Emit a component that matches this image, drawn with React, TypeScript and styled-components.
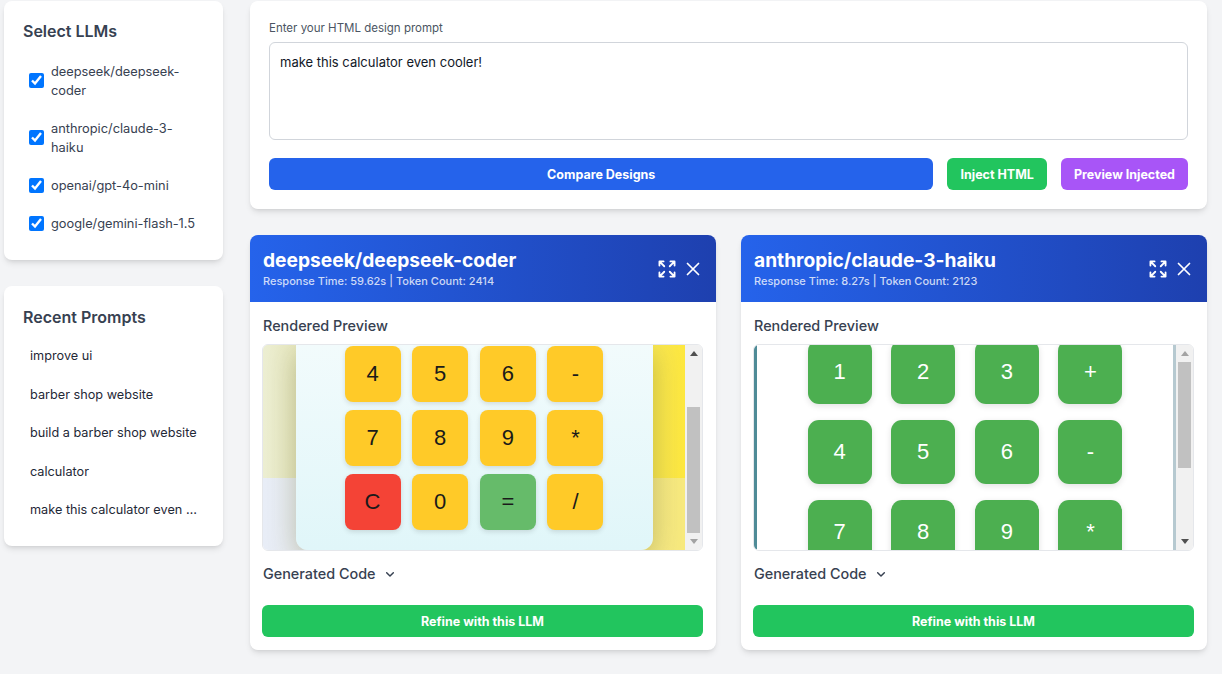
import React from "react";
import styled, { createGlobalStyle } from "styled-components";

const GlobalStyle = createGlobalStyle`
  * { box-sizing: border-box; }
  html, body { margin: 0; padding: 0; background: #f3f4f6; }
  body { font-family: Inter, "Noto Sans", sans-serif; color: #1f2937; }
`;

const Page = styled.div`
  display: flex;
  align-items: flex-start;
  gap: 27px;
  width: 1222px;
  padding: 1px 15px 24px 4px;
`;

const Sidebar = styled.aside`
  width: 219px;
  flex: none;
  display: flex;
  flex-direction: column;
  gap: 26px;
`;

const Panel = styled.section`
  background: #ffffff;
  border-radius: 8px;
  box-shadow: 0 4px 6px -1px rgba(0, 0, 0, 0.1), 0 2px 4px -2px rgba(0, 0, 0, 0.1);
`;

const SideCard = styled(Panel)<{ $top: number; $bottom: number }>`
  padding: ${(p) => p.$top}px 19px ${(p) => p.$bottom}px;
`;

const SideTitle = styled.h2`
  margin: 0;
  font-size: 16px;
  line-height: 20px;
  font-weight: 600;
  color: #374151;
`;

const CheckList = styled.div`
  margin-top: 11px;
  display: flex;
  flex-direction: column;
`;

const CheckItem = styled.label`
  display: flex;
  align-items: center;
  gap: 7px;
  padding: 9.5px 6px 9.5px 6px;
  font-size: 12.8px;
  line-height: 19px;
  color: #374151;
`;

const Check = styled.input`
  width: 15px;
  height: 15px;
  margin: 0;
  flex: none;
`;

const PromptList = styled.div`
  margin-top: 10px;
  display: flex;
  flex-direction: column;
`;

const PromptItem = styled.button`
  display: block;
  width: 100%;
  text-align: left;
  background: none;
  border: 0;
  padding: 10px 5px 10px 7px;
  font-family: inherit;
  font-size: 12.7px;
  line-height: 18.5px;
  color: #1f2937;
  white-space: nowrap;
  overflow: hidden;
  text-overflow: ellipsis;
  cursor: pointer;
`;

const Main = styled.main`
  flex: 1;
  min-width: 0;
  display: flex;
  flex-direction: column;
  gap: 26px;
`;

const PromptCard = styled(Panel)`
  padding: 20px 19px 19px;
`;

const FieldLabel = styled.label`
  display: block;
  font-size: 11.5px;
  line-height: 14px;
  color: #4b5563;
  margin-bottom: 7px;
`;

const PromptArea = styled.textarea`
  display: block;
  width: 100%;
  height: 98px;
  margin: 0 0 18px;
  padding: 10px;
  border: 1px solid #d1d5db;
  border-radius: 6px;
  font-family: inherit;
  font-size: 13px;
  line-height: 18px;
  color: #111827;
  resize: none;
  outline: none;
`;

const ButtonRow = styled.div`
  display: flex;
  gap: 14px;
`;

const ActionButton = styled.button<{ $bg: string; $grow?: boolean }>`
  flex: ${(p) => (p.$grow ? "1" : "none")};
  height: 32px;
  padding: 0 13px;
  border: 0;
  border-radius: 6px;
  background: ${(p) => p.$bg};
  color: #ffffff;
  font-family: inherit;
  font-size: 12.5px;
  font-weight: 700;
  cursor: pointer;
`;

const CardGrid = styled.div`
  display: grid;
  grid-template-columns: 1fr 1fr;
  gap: 25px;
`;

const ResultCard = styled(Panel)`
  overflow: hidden;
  display: flex;
  flex-direction: column;
`;

const CardHeader = styled.header`
  display: flex;
  align-items: center;
  justify-content: space-between;
  padding: 14px 12px 14px 13px;
  background: linear-gradient(90deg, #2563eb, #1e40af);
  color: #ffffff;
`;

const HeaderTitle = styled.h3`
  margin: 0;
  font-size: 19.2px;
  line-height: 22px;
  font-weight: 700;
`;

const HeaderMeta = styled.div`
  margin-top: 3px;
  font-size: 11px;
  line-height: 14px;
  font-weight: 500;
  color: rgba(255, 255, 255, 0.78);
`;

const IconGroup = styled.div`
  display: flex;
  align-items: center;
  gap: 4px;
`;

const IconButton = styled.button`
  display: flex;
  align-items: center;
  justify-content: center;
  width: 22px;
  height: 22px;
  padding: 0;
  border: 0;
  background: none;
  color: #ffffff;
  cursor: pointer;
`;

const CardBody = styled.div`
  padding: 14px 13px 13px 12px;
  display: flex;
  flex-direction: column;
`;

const SectionLabel = styled.div`
  font-size: 14.4px;
  line-height: 20px;
  font-weight: 500;
  color: #374151;
  padding-left: 1px;
`;

const Frame = styled.div`
  margin-top: 8px;
  height: 207px;
  border: 1px solid #e5e7eb;
  border-radius: 6px;
  overflow: hidden;
  display: flex;
`;

const CodeToggle = styled.div`
  margin-top: 13px;
  display: flex;
  align-items: center;
  gap: 6px;
`;

const RefineButton = styled.button`
  margin-top: 21px;
  height: 32px;
  border: 0;
  border-radius: 6px;
  background: #22c55e;
  color: #ffffff;
  font-family: inherit;
  font-size: 12.5px;
  font-weight: 700;
  cursor: pointer;
`;

/* ---- left preview (yellow calculator) ---- */
const SunnyViewport = styled.div`
  flex: 1;
  overflow: hidden;
  display: flex;
  flex-direction: column;
  justify-content: flex-end;
  align-items: center;
  background:
    linear-gradient(90deg, #eceed2, #e4e3a8 18%, #f4ea78 80%, #fde73e) top / 100% 133px no-repeat,
    linear-gradient(90deg, #e8edf7, #eef0d8 40%, #f5ea92 85%, #f7e97c);
`;

const CalcPanel = styled.div`
  width: 357px;
  flex: none;
  padding: 1px 0 20px;
  border-radius: 0 0 12px 12px;
  background: linear-gradient(180deg, #f2fbfc, #e0f6f9);
  box-shadow: 0 8px 28px rgba(60, 60, 0, 0.28);
`;

const YellowGrid = styled.div`
  display: grid;
  grid-template-columns: repeat(4, 56px);
  column-gap: 11.67px;
  row-gap: 8px;
  justify-content: center;
`;

const YellowKey = styled.div<{ $bg: string }>`
  height: 56px;
  border-radius: 8px;
  background: ${(p) => p.$bg};
  display: flex;
  align-items: center;
  justify-content: center;
  font-family: "Liberation Sans", Arial, sans-serif;
  font-size: 22px;
  color: #1a1a1a;
  box-shadow: 0 2px 5px rgba(0, 0, 0, 0.12);
`;

/* ---- right preview (green calculator) ---- */
const PlainViewport = styled.div`
  flex: 1;
  overflow: hidden;
  background: #ffffff;
  border-left: 3px solid #4f8b97;
  border-right: 3px solid #b6c9d0;
`;

const GreenGrid = styled.div`
  margin-top: -5px;
  display: grid;
  grid-template-columns: repeat(4, 64px);
  column-gap: 19.67px;
  row-gap: 16px;
  justify-content: center;
`;

const GreenKey = styled.div`
  height: 64px;
  border-radius: 11px;
  background: #4caf50;
  display: flex;
  align-items: center;
  justify-content: center;
  font-family: "Liberation Sans", Arial, sans-serif;
  font-size: 22px;
  color: #ffffff;
  box-shadow: 0 2px 6px rgba(0, 0, 0, 0.12);
`;

/* ---- fake scrollbar ---- */
const ScrollBar = styled.div`
  width: 17px;
  flex: none;
  background: #f1f1f1;
  display: flex;
  flex-direction: column;
`;

const ArrowBox = styled.div`
  height: 17px;
  flex: none;
  display: flex;
  align-items: center;
  justify-content: center;
`;

const Track = styled.div`
  flex: 1;
  display: flex;
  flex-direction: column;
`;

const Thumb = styled.div<{ $offset: number; $size: number }>`
  margin: ${(p) => p.$offset}px 2px 0;
  height: ${(p) => p.$size}px;
  background: #c1c1c1;
`;

const Arrow = ({ up, color }: { up?: boolean; color: string }) => (
  <svg width="8" height="5" viewBox="0 0 8 5">
    <polygon points={up ? "0,5 8,5 4,0" : "0,0 8,0 4,5"} fill={color} />
  </svg>
);

const FakeScroll = ({
  offset,
  size,
  upColor,
  downColor,
}: {
  offset: number;
  size: number;
  upColor: string;
  downColor: string;
}) => (
  <ScrollBar>
    <ArrowBox>
      <Arrow up color={upColor} />
    </ArrowBox>
    <Track>
      <Thumb $offset={offset} $size={size} />
    </Track>
    <ArrowBox>
      <Arrow color={downColor} />
    </ArrowBox>
  </ScrollBar>
);

const ExpandIcon = () => (
  <svg width="22" height="22" viewBox="0 0 24 24" fill="none" stroke="currentColor" strokeWidth="2" strokeLinecap="round" strokeLinejoin="round">
    <path d="M3.75 3.75v4.5m0-4.5h4.5m-4.5 0L9 9M3.75 20.25v-4.5m0 4.5h4.5m-4.5 0L9 15M20.25 3.75h-4.5m4.5 0v4.5m0-4.5L15 9m5.25 11.25h-4.5m4.5 0v-4.5m0 4.5L15 15" />
  </svg>
);

const CloseIcon = () => (
  <svg width="22" height="22" viewBox="0 0 24 24" fill="none" stroke="currentColor" strokeWidth="1.9" strokeLinecap="round" strokeLinejoin="round">
    <path d="M6 18 18 6M6 6l12 12" />
  </svg>
);

const Chevron = () => (
  <svg width="16" height="16" viewBox="0 0 24 24" fill="none" stroke="#374151" strokeWidth="2.2" strokeLinecap="round" strokeLinejoin="round">
    <polyline points="7 10 12 15 17 10" />
  </svg>
);

const yellowKeys: { label: string; bg: string }[] = [
  ..."456-".split("").map((l) => ({ label: l, bg: "#ffca28" })),
  ..."789*".split("").map((l) => ({ label: l, bg: "#ffca28" })),
  { label: "C", bg: "#f44336" },
  { label: "0", bg: "#ffca28" },
  { label: "=", bg: "#66bb6a" },
  { label: "/", bg: "#ffca28" },
];

const greenKeys = "123+456-789*".split("");

const SunnyPreview = () => (
  <Frame>
    <SunnyViewport>
      <CalcPanel>
        <YellowGrid>
          {yellowKeys.map((k, i) => (
            <YellowKey key={i} $bg={k.bg}>
              {k.label}
            </YellowKey>
          ))}
        </YellowGrid>
      </CalcPanel>
    </SunnyViewport>
    <FakeScroll offset={45} size={126} upColor="#505050" downColor="#a3a3a3" />
  </Frame>
);

const GreenPreview = () => (
  <Frame>
    <PlainViewport>
      <GreenGrid>
        {greenKeys.map((k, i) => (
          <GreenKey key={i}>{k}</GreenKey>
        ))}
      </GreenGrid>
    </PlainViewport>
    <FakeScroll offset={0} size={106} upColor="#a3a3a3" downColor="#505050" />
  </Frame>
);

const LLMCard = ({
  name,
  meta,
  preview,
}: {
  name: string;
  meta: string;
  preview: React.ReactNode;
}) => (
  <ResultCard>
    <CardHeader>
      <div>
        <HeaderTitle>{name}</HeaderTitle>
        <HeaderMeta>{meta}</HeaderMeta>
      </div>
      <IconGroup>
        <IconButton aria-label="Expand">
          <ExpandIcon />
        </IconButton>
        <IconButton aria-label="Close">
          <CloseIcon />
        </IconButton>
      </IconGroup>
    </CardHeader>
    <CardBody>
      <SectionLabel>Rendered Preview</SectionLabel>
      {preview}
      <CodeToggle>
        <SectionLabel>Generated Code</SectionLabel>
        <Chevron />
      </CodeToggle>
      <RefineButton>Refine with this LLM</RefineButton>
    </CardBody>
  </ResultCard>
);

const models = [
  "deepseek/deepseek-coder",
  "anthropic/claude-3-haiku",
  "openai/gpt-4o-mini",
  "google/gemini-flash-1.5",
];

const recent = [
  "improve ui",
  "barber shop website",
  "build a barber shop website",
  "calculator",
  "make this calculator even cooler!",
];

export default function App() {
  return (
    <>
      <GlobalStyle />
      <Page>
        <Sidebar>
          <SideCard $top={20} $bottom={18}>
            <SideTitle>Select LLMs</SideTitle>
            <CheckList>
              {models.map((m) => (
                <CheckItem key={m}>
                  <Check type="checkbox" defaultChecked />
                  <span>{m}</span>
                </CheckItem>
              ))}
            </CheckList>
          </SideCard>
          <SideCard $top={21} $bottom={16}>
            <SideTitle>Recent Prompts</SideTitle>
            <PromptList>
              {recent.map((r) => (
                <PromptItem key={r}>{r}</PromptItem>
              ))}
            </PromptList>
          </SideCard>
        </Sidebar>
        <Main>
          <PromptCard>
            <FieldLabel htmlFor="prompt">Enter your HTML design prompt</FieldLabel>
            <PromptArea id="prompt" defaultValue="make this calculator even cooler!" />
            <ButtonRow>
              <ActionButton $bg="#2563eb" $grow>
                Compare Designs
              </ActionButton>
              <ActionButton $bg="#22c55e">Inject HTML</ActionButton>
              <ActionButton $bg="#a855f7">Preview Injected</ActionButton>
            </ButtonRow>
          </PromptCard>
          <CardGrid>
            <LLMCard
              name="deepseek/deepseek-coder"
              meta="Response Time: 59.62s | Token Count: 2414"
              preview={<SunnyPreview />}
            />
            <LLMCard
              name="anthropic/claude-3-haiku"
              meta="Response Time: 8.27s | Token Count: 2123"
              preview={<GreenPreview />}
            />
          </CardGrid>
        </Main>
      </Page>
    </>
  );
}
